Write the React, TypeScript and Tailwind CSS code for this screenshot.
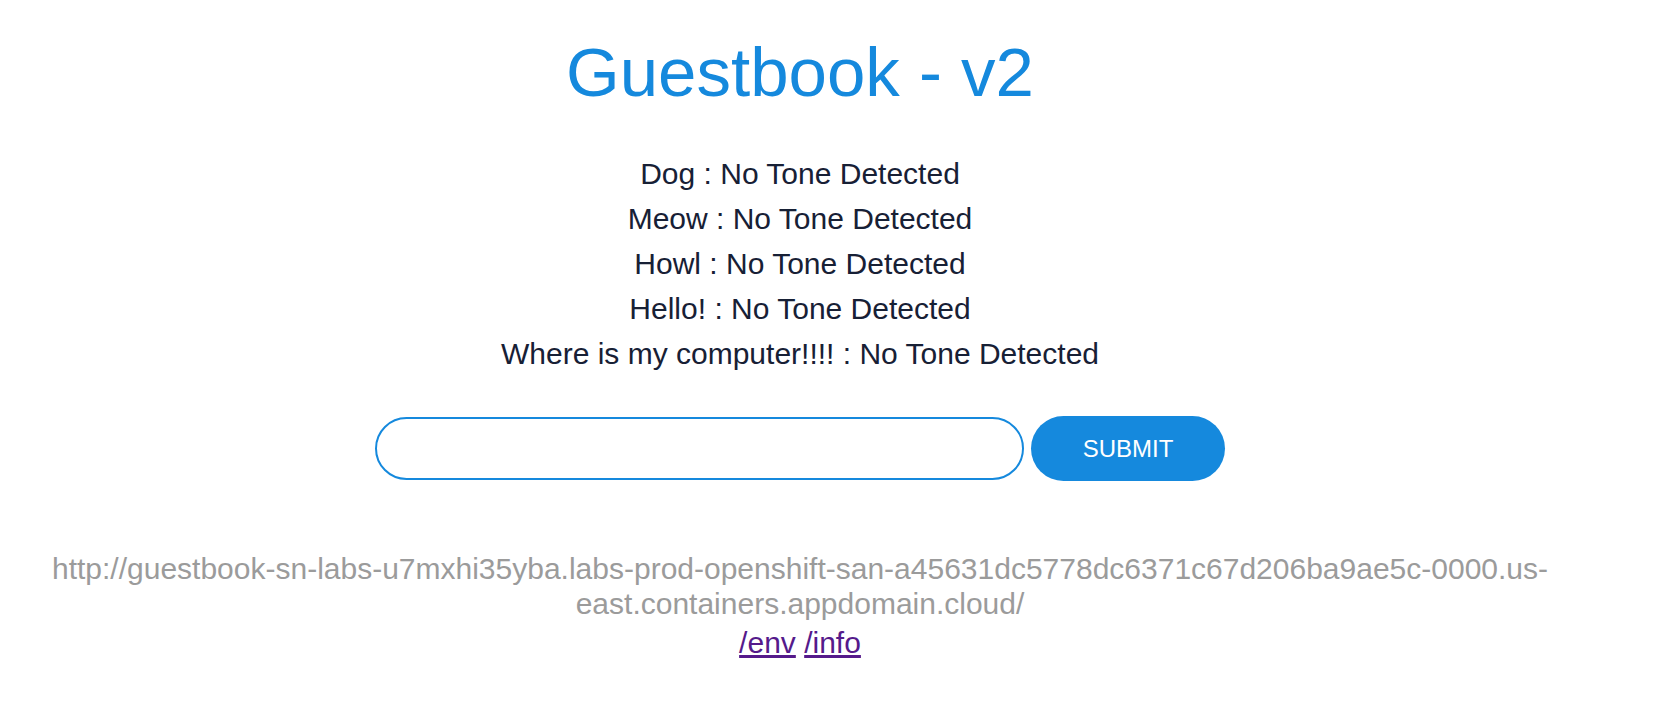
import { useState } from 'react'

const entries = [
  'Dog : No Tone Detected',
  'Meow : No Tone Detected',
  'Howl : No Tone Detected',
  'Hello! : No Tone Detected',
  'Where is my computer!!!! : No Tone Detected',
]

export default function App() {
  const [value, setValue] = useState('')

  return (
    <div className="min-h-screen w-full bg-white font-['Liberation_Sans',Arial,sans-serif]">
      <div className="w-[1600px] flex flex-col items-center text-center">
        {/* Header */}
        <h1 className="mt-[33px] text-[69px] leading-[80px] text-[#1589dd]">Guestbook - v2</h1>

        {/* Guestbook entries */}
        <ul className="mt-[38px] text-[30px] leading-[45px] text-[#172035]">
          {entries.map((entry) => (
            <li key={entry}>{entry}</li>
          ))}
        </ul>

        {/* Entry form */}
        <form className="mt-10 flex items-center gap-[7px]" onSubmit={(e) => e.preventDefault()}>
          <input
            value={value}
            onChange={(e) => setValue(e.target.value)}
            className="w-[649px] h-[63px] rounded-full border-2 border-[#1589dd] bg-white px-6 text-[24px] outline-none"
          />
          <button
            type="submit"
            className="w-[194px] h-[65px] rounded-full bg-[#1589dd] text-[24px] text-white"
          >
            SUBMIT
          </button>
        </form>

        {/* Footer */}
        <div className="mt-[71px] text-[30px] leading-[34.5px] text-[#9b9b9b]">
          http://guestbook-sn-labs-u7mxhi35yba.labs-prod-openshift-san-a45631dc5778dc6371c67d206ba9ae5c-0000.us-
          <br />
          east.containers.appdomain.cloud/
        </div>
        <div className="mt-[5px] text-[30px] leading-[34.5px]">
          <a href="#env" className="text-[#551a8b] underline">
            /env
          </a>{' '}
          <a href="#info" className="text-[#551a8b] underline">
            /info
          </a>
        </div>
      </div>
    </div>
  )
}
